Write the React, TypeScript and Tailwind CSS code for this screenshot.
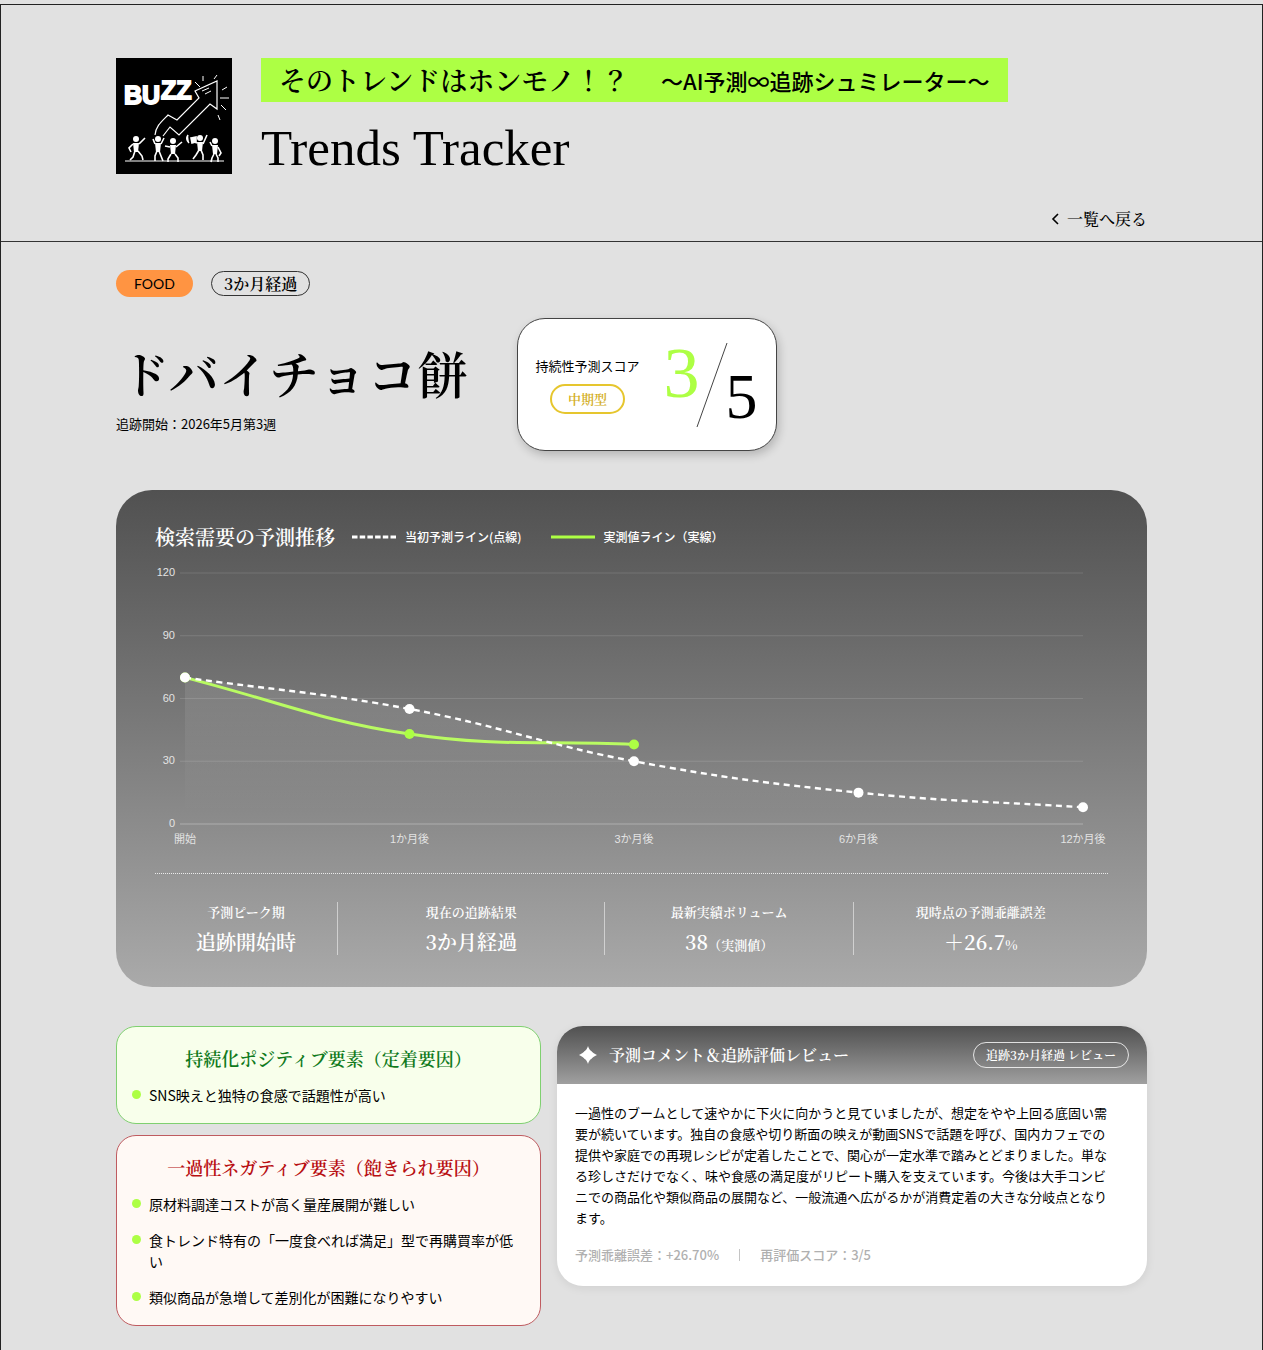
import type { ReactNode } from "react";

const MINCHO = "font-['Noto_Serif_CJK_JP','Liberation_Serif','Noto_Sans_CJK_JP',serif]";
const SERIF = "font-['Liberation_Serif',serif]";

const positives = ["SNS映えと独特の食感で話題性が高い"];
const negatives = [
  "原材料調達コストが高く量産展開が難しい",
  "食トレンド特有の「一度食べれば満足」型で再購買率が低い",
  "類似商品が急増して差別化が困難になりやすい",
];

const stats: { label: string; value: string; note?: string }[] = [
  { label: "予測ピーク期", value: "追跡開始時" },
  { label: "現在の追跡結果", value: "3か月経過" },
  { label: "最新実績ボリューム", value: "38", note: "（実測値）" },
  { label: "現時点の予測乖離誤差", value: "＋26.7", note: "%" },
];

const months = ["開始", "1か月後", "3か月後", "6か月後", "12か月後"];
const forecast = [70, 55, 30, 15, 8];
const actual = [70, 43, 38];

// Plot area inside the 953x292 chart canvas
const PLOT = { left: 30, right: 928, top: 15, bottom: 266, max: 120 };

type Point = { x: number; y: number };

const yFor = (v: number) => PLOT.bottom - (v / PLOT.max) * (PLOT.bottom - PLOT.top);
const xFor = (i: number) => PLOT.left + (i / (months.length - 1)) * (PLOT.right - PLOT.left);
const toPoints = (values: number[]): Point[] => values.map((v, i) => ({ x: xFor(i), y: yFor(v) }));

// Smooth path through all points, control points follow the neighbours' slope
function spline(pts: Point[], tension = 0.4) {
  const ctrl = pts.map((p, i) => {
    const prev = pts[i - 1] ?? p;
    const next = pts[i + 1] ?? p;
    const d01 = Math.hypot(p.x - prev.x, p.y - prev.y);
    const d12 = Math.hypot(next.x - p.x, next.y - p.y);
    const a = (tension * d01) / (d01 + d12);
    const b = (tension * d12) / (d01 + d12);
    return {
      before: { x: p.x - a * (next.x - prev.x), y: p.y - a * (next.y - prev.y) },
      after: { x: p.x + b * (next.x - prev.x), y: p.y + b * (next.y - prev.y) },
    };
  });
  return pts
    .map((p, i) => {
      if (i === 0) return `M${p.x} ${p.y}`;
      const c1 = ctrl[i - 1].after;
      const c2 = ctrl[i].before;
      return `C${c1.x} ${c1.y} ${c2.x} ${c2.y} ${p.x} ${p.y}`;
    })
    .join(" ");
}

export default function App() {
  return (
    <div className="min-h-screen bg-[#e1e1e1] pt-1 font-['Noto_Sans_CJK_JP',sans-serif] text-black">
      <div className="min-h-screen border-x border-t border-[#222]">
        <Header />
        <main className="px-[115px] pt-7 pb-6">
          <TrendTitle />
          <ChartCard />
          <div className="mt-[39px] grid grid-cols-[425fr_590fr] items-start gap-4">
            <div className="flex flex-col gap-[11px]">
              <FactorCard
                title="持続化ポジティブ要素（定着要因）"
                items={positives}
                className="border-[#7fd070] bg-[#f8ffeb]"
                titleClassName="text-[#107a1c]"
              />
              <FactorCard
                title="一過性ネガティブ要素（飽きられ要因）"
                items={negatives}
                className="border-[#bf5b60] bg-[#fff9f5]"
                titleClassName="text-[#b80f12]"
              />
            </div>
            <ReviewCard />
          </div>
        </main>
      </div>
    </div>
  );
}

function Header() {
  return (
    <header className="border-b border-[#333] px-[115px] pt-[53px] pb-[10px]">
      <div className="flex items-start gap-[29px]">
        <Logo />
        <div>
          <p className="flex h-11 items-center gap-8 bg-[#adff44] px-[18px] whitespace-nowrap">
            <span className={`${MINCHO} text-[27px] font-semibold`}>そのトレンドはホンモノ！？</span>
            <span className="text-[22px] font-medium">〜AI予測∞追跡シュミレーター〜</span>
          </p>
          <h1 className={`${SERIF} mt-[21px] text-[51px] leading-[51px]`}>Trends Tracker</h1>
        </div>
      </div>
      <div className="mt-[33px] flex justify-end">
        <a href="#list" className={`${MINCHO} flex h-6 items-center gap-2 text-base font-medium`}>
          <svg viewBox="0 0 8 12" className="h-3 w-2" fill="none" stroke="currentColor" strokeWidth="1.6">
            <path d="M7 1 2 6l5 5" />
          </svg>
          一覧へ戻る
        </a>
      </div>
    </header>
  );
}

function Figure({ x, y, children }: { x: number; y: number; children: ReactNode }) {
  return (
    <g transform={`translate(${x} ${y})`}>
      <circle cx="0" cy="-21" r="3" fill="#fff" stroke="none" />
      <path d="M-3-17H3L2-8H-2Z" fill="#fff" stroke="none" />
      {children}
    </g>
  );
}

function Logo() {
  return (
    <svg viewBox="0 0 116 116" className="size-[116px] shrink-0" role="img" aria-label="BUZZ">
      <rect width="116" height="116" fill="#000" />
      <g
        fill="#fff"
        stroke="#fff"
        strokeWidth="1.8"
        fontWeight="700"
        fontFamily="'Liberation Sans', sans-serif"
      >
        <text x="8" y="46" fontSize="25">BU</text>
        <text x="45" y="41" fontSize="25">ZZ</text>
      </g>
      <g fill="none" stroke="#fff" strokeWidth="1">
        {/* rising arrow */}
        <path d="M39 77c1-9 6-13 13-20l9 5 22-22-4-7 22-10v28l-7-5-31 31-9-8-7 9" strokeWidth="1.2" />
        <path d="m86 33 7-3M89 36l6-3" />
        <path d="m79 24 5 5M87 18v5M98 21l3-4M106 32l5-3M104 40h9M105 47l5 5M102 57l2 5" />
      </g>
      <g fill="none" stroke="#fff" strokeWidth="1.6">
        <Figure x={20} y={102}>
          <path d="m3-16 6-6M-3-16l-4 4 2 4M-1-9l-2 6-3 3M2-9l4 5 1 4" />
        </Figure>
        <Figure x={42} y={102}>
          <path d="m3-16 3-6M-3-16l-2-5M-1-9l-2 5v5M1-9l2 5 2 5" />
        </Figure>
        <Figure x={57} y={104}>
          <path d="m3-15 6-5M-3-15l-5-1M-2-8l-3 5v3M2-8l3 4v4" />
        </Figure>
        <Figure x={84} y={101}>
          <path d="m3-15 4-9M-3-16l-5-2M-1-9l-3 5-3 4M1-9l2 5v5" />
          <path d="M-12-24c-2 3-1 6 1 8M-9-21l5-1v5l-4 1z" fill="#fff" />
        </Figure>
        <Figure x={99} y={104}>
          <path d="m3-15 3 6-2 3M-3-16l-2-4M-1-8l-2 4-1 4M1-8l2 4v4" />
        </Figure>
      </g>
      <path d="M9 103h99" stroke="#fff" strokeWidth="1" />
    </svg>
  );
}

function TrendTitle() {
  return (
    <section>
      <div className="flex items-center gap-[18px]">
        <span className="rounded-full bg-[#ff9442] px-[18px] font-['Lato',sans-serif] text-[14px] leading-[27px]">
          FOOD
        </span>
        <span className={`${MINCHO} rounded-full border border-[#333] px-3 text-base leading-[23px] font-semibold`}>
          3か月経過
        </span>
      </div>
      <div className="mt-[21px] flex items-center gap-[49px]">
        <div className="pt-[6px]">
          <h2 className={`${MINCHO} pl-1 text-[50px] leading-[60px] font-semibold whitespace-nowrap`}>ドバイチョコ餅</h2>
          <p className="mt-3 text-[13px] leading-5">追跡開始：2026年5月第3週</p>
        </div>
        <ScoreCard />
      </div>
    </section>
  );
}

function ScoreCard() {
  return (
    <div className="flex h-[133px] items-center gap-6 rounded-[28px] border border-[#444] bg-white px-[18px] shadow-[2px_4px_10px_rgba(0,0,0,0.2)]">
      <div className="flex flex-col items-center gap-2">
        <span className="text-[13px] leading-5 whitespace-nowrap">持続性予測スコア</span>
        <span
          className={`${MINCHO} rounded-full border-2 border-[#e6c62e] px-4 text-[13px] leading-[26px] font-semibold text-[#d3ae1c]`}
        >
          中期型
        </span>
      </div>
      <div className={`${SERIF} flex items-center`}>
        <span className="pb-6 text-[72px] leading-[72px] text-[#adff44]">3</span>
        <svg viewBox="0 0 32 84" className="-mr-[2px] -ml-1 h-[84px] w-8" stroke="#444">
          <path d="M31 0 1 84" />
        </svg>
        <span className="pt-6 text-[64px] leading-[64px]">5</span>
      </div>
    </div>
  );
}

function ChartCard() {
  return (
    <section className="mt-[39px] rounded-[36px] bg-linear-to-b from-[#515151] to-[#aaaaaa] px-[39px] pt-8 pb-8 text-white">
      <div className="flex h-[30px] items-center">
        <h3 className={`${MINCHO} text-[20px] font-semibold`}>検索需要の予測推移</h3>
        <Legend label="当初予測ライン(点線)" className="ml-4" dashed />
        <Legend label="実測値ライン（実線）" className="ml-7" />
      </div>
      <TrendChart />
      <dl
        className={`${MINCHO} mt-[23px] grid grid-cols-[183fr_267fr_248fr_254fr] border-t border-dotted border-white/80 pt-7 text-center font-semibold`}
      >
        {stats.map((s) => (
          <div key={s.label} className="h-[53px] border-r border-white/50 last:border-r-0">
            <dt className="text-[13px] leading-5">{s.label}</dt>
            <dd className="mt-[6px] text-[20px] leading-7">
              {s.value}
              {s.note && <span className="text-[13px]">{s.note}</span>}
            </dd>
          </div>
        ))}
      </dl>
    </section>
  );
}

function Legend({ label, className, dashed }: { label: string; className: string; dashed?: boolean }) {
  return (
    <div className={`flex items-center gap-2 text-[12px] font-medium ${className}`}>
      <svg viewBox="0 0 46 4" className="h-1 w-[46px]" strokeWidth="3">
        <path d="M1 2h44" stroke={dashed ? "#fff" : "#adff44"} strokeDasharray={dashed ? "5.5 2.2" : undefined} />
      </svg>
      {label}
    </div>
  );
}

function TrendChart() {
  const forecastPts = toPoints(forecast);
  const actualPts = toPoints(actual);
  return (
    <svg
      viewBox="0 0 953 292"
      className="mt-[6px] block w-full overflow-visible font-['Liberation_Sans','Noto_Sans_CJK_JP',sans-serif] text-[11px]"
      role="img"
      aria-label="検索需要の予測推移"
    >
      <defs>
        <linearGradient id="area" x1="0" y1={yFor(70)} x2="0" y2={yFor(5)} gradientUnits="userSpaceOnUse">
          <stop offset="0" stopColor="#fff" stopOpacity="0.1" />
          <stop offset="1" stopColor="#fff" stopOpacity="0" />
        </linearGradient>
      </defs>
      {[120, 90, 60, 30, 0].map((v) => (
        <g key={v}>
          <path
            d={`M${PLOT.left - 5} ${yFor(v)}H${PLOT.right}`}
            stroke="#fff"
            strokeOpacity={v === 0 ? 0.3 : 0.13}
          />
          <text x={PLOT.left - 10} y={yFor(v) + 3} textAnchor="end" fill="#e3e3e3">
            {v}
          </text>
        </g>
      ))}
      {months.map((m, i) => (
        <text key={m} x={xFor(i)} y={PLOT.bottom + 19} textAnchor="middle" fill="#e3e3e3">
          {m}
        </text>
      ))}
      <path d={`${spline(forecastPts)} V${PLOT.bottom} H${PLOT.left} Z`} fill="url(#area)" />
      <path d={spline(actualPts)} fill="none" stroke="#b9fb62" strokeWidth="3" />
      <path d={spline(forecastPts)} fill="none" stroke="#fff" strokeWidth="2.4" strokeDasharray="6 4.5" />
      {actualPts.map((p) => (
        <circle key={p.x} cx={p.x} cy={p.y} r="5" fill="#adff44" />
      ))}
      {forecastPts.map((p) => (
        <circle key={p.x} cx={p.x} cy={p.y} r="5" fill="#fff" />
      ))}
    </svg>
  );
}

function FactorCard({
  title,
  items,
  className,
  titleClassName,
}: {
  title: string;
  items: string[];
  className: string;
  titleClassName: string;
}) {
  return (
    <section className={`rounded-[20px] border px-[15px] pt-[18px] pb-[17px] ${className}`}>
      <h3 className={`${MINCHO} text-center text-[18px] leading-[26px] font-semibold ${titleClassName}`}>{title}</h3>
      <ul className="mt-[14px] flex flex-col gap-[15px]">
        {items.map((item) => (
          <li key={item} className="flex items-start gap-2 text-[14px] leading-[21px]">
            <span className="mt-[5px] size-[9px] shrink-0 rounded-full bg-[#adff44]" />
            {item}
          </li>
        ))}
      </ul>
    </section>
  );
}

function ReviewCard() {
  return (
    <section className="overflow-hidden rounded-[26px] bg-white shadow-[0_2px_10px_rgba(0,0,0,0.08)]">
      <header
        className={`${MINCHO} flex h-[58px] items-center bg-linear-to-b from-[#515151] to-[#a0a0a0] pr-[18px] pl-[22px] text-white`}
      >
        <svg viewBox="0 0 18 18" className="size-[18px]" fill="#fff">
          <path d="M9 0c1.300 4 3.500 6.400 9 9-5.500 2.600-7.700 5-9 9-1.300-4-3.500-6.400-9-9 5.500-2.600 7.700-5 9-9Z" />
          <circle cx="9" cy="9" r="5" />
        </svg>
        <h3 className="ml-3 text-base font-semibold">予測コメント＆追跡評価レビュー</h3>
        <span className="ml-auto rounded-full border border-white/80 px-3 text-[12px] leading-6 font-semibold">
          追跡3か月経過 レビュー
        </span>
      </header>
      <div className="pt-[18px] pr-8 pb-5 pl-[18px] text-[13px]">
        <p className="leading-[21px]">
          一過性のブームとして速やかに下火に向かうと見ていましたが、想定をやや上回る底固い需要が続いています。独自の食感や切り断面の映えが動画SNSで話題を呼び、国内カフェでの提供や家庭での再現レシピが定着したことで、関心が一定水準で踏みとどまりました。単なる珍しさだけでなく、味や食感の満足度がリピート購入を支えています。今後は大手コンビニでの商品化や類似商品の展開など、一般流通へ広がるかが消費定着の大きな分岐点となります。
        </p>
        <div className="mt-4 flex items-center leading-[22px] font-medium text-[#b0b0b0]">
          <span>予測乖離誤差：+26.70%</span>
          <span className="mx-5 h-3 w-px bg-[#c4c4c4]" />
          <span>再評価スコア：3/5</span>
        </div>
      </div>
    </section>
  );
}
